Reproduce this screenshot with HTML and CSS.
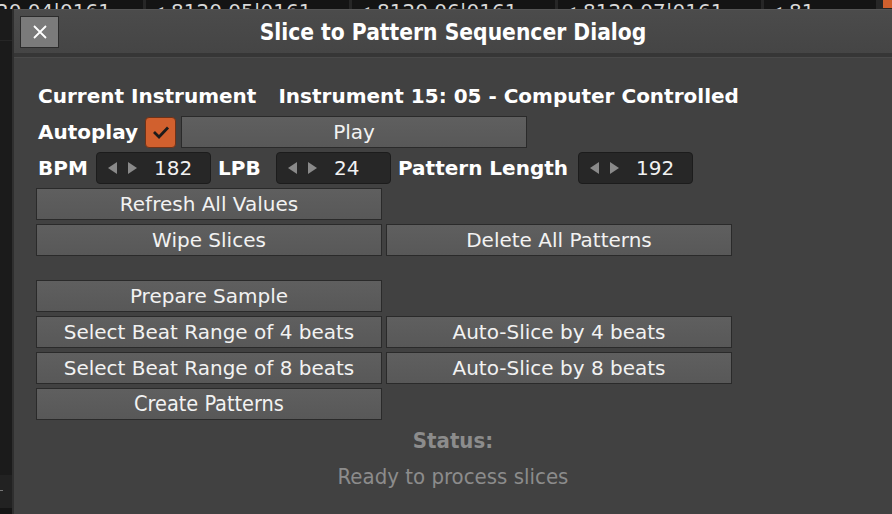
FILE: index.html
```html
<!DOCTYPE html>
<html>
<head>
<meta charset="utf-8">
<link rel="stylesheet" href="styles.css">
</head>
<body>
<div class="strip">
  <div class="cell first"><span class="ctext">20 04|0161</span></div>
  <div class="cell"><span class="tri">◂</span><span class="ctext">8120 05|0161</span></div>
  <div class="cell"><span class="tri">◂</span><span class="ctext">8120 06|0161</span></div>
  <div class="cell"><span class="tri">◂</span><span class="ctext">8120 07|0161</span></div>
  <div class="cell last"><span class="tri">◂</span><span class="ctext">81</span></div>
  <div class="orange"></div>
</div>
<div class="main">
  <div class="gutter">
    <div class="g1"></div>
    <div class="g2"></div>
    <div class="g3"></div>
    <div class="g4"><span class="dash"></span></div>
    <div class="g5"></div>
  </div>
  <div class="dialog">
    <div class="titlebar">
      <div class="close">
        <svg width="16" height="16" viewBox="0 0 16 16"><path d="M2 2 L14 14 M14 2 L2 14" stroke="#fff" stroke-width="1.8" fill="none"/></svg>
      </div>
      <div class="title">Slice to Pattern Sequencer Dialog</div>
      <div></div>
    </div>
    <div class="sep"></div>
    <div class="content">
      <div class="row labelrow">
        <span class="lbl">Current Instrument</span>
        <span class="lbl">Instrument 15: 05 - Computer Controlled</span>
      </div>
      <div class="row">
        <span class="lbl">Autoplay</span>
        <span class="check">
          <svg width="18" height="14" viewBox="0 0 18 14"><path d="M2 7 L7 12 L16 2.5" stroke="#1b1b1b" stroke-width="2.8" fill="none"/></svg>
        </span>
        <button class="btn play">Play</button>
      </div>
      <div class="row spinrow">
        <span class="lbl sl bpm">BPM</span>
        <div class="spin"><span class="arr l"></span><span class="arr r"></span><span class="val">182</span></div>
        <span class="lbl sl lpb">LPB</span>
        <div class="spin"><span class="arr l"></span><span class="arr r"></span><span class="val">24</span></div>
        <span class="lbl sl plen">Pattern Length</span>
        <div class="spin"><span class="arr l"></span><span class="arr r"></span><span class="val">192</span></div>
      </div>
      <div class="grid">
        <button class="btn">Refresh All Values</button>
        <div></div>
        <button class="btn">Wipe Slices</button>
        <button class="btn">Delete All Patterns</button>
        <div></div>
        <div></div>
        <button class="btn">Prepare Sample</button>
        <div></div>
        <button class="btn">Select Beat Range of 4 beats</button>
        <button class="btn">Auto-Slice by 4 beats</button>
        <button class="btn">Select Beat Range of 8 beats</button>
        <button class="btn">Auto-Slice by 8 beats</button>
        <button class="btn cond">Create Patterns</button>
        <div></div>
      </div>
      <div class="status">
        <div class="srow bold">Status:</div>
        <div class="srow">Ready to process slices</div>
      </div>
    </div>
  </div>
</div>
</body>
</html>
```
FILE: styles.css
```css
html, body {
  margin: 0;
  padding: 0;
}
body {
  width: 892px;
  height: 514px;
  overflow: hidden;
  background: #1b1b1b;
  font-family: "DejaVu Sans", "Liberation Sans", sans-serif;
}
.strip {
  height: 9px;
  display: flex;
  overflow: hidden;
  background: #262626;
}
.cell {
  flex: 0 0 203px;
  margin-right: 3px;
  background: #141414;
  color: #d8d8d8;
  font-size: 20px;
  line-height: 20px;
  display: flex;
  align-items: flex-end;
  height: 9px;
  overflow: hidden;
  white-space: nowrap;
  padding-left: 10px;
  box-sizing: border-box;
}
.cell .ctext {
  display: block;
  transform: translateY(12px);
}
.cell .tri {
  display: block;
  font-size: 14px;
  margin-right: 8px;
  transform: translateY(10px);
}
.cell.first {
  flex: 0 0 143px;
  padding-left: 0;
}
.cell.first .ctext { margin-left: -4px; }
.cell.last {
  flex: 0 0 112px;
  margin-right: 7px;
}
.orange {
  flex: 1;
  background: #d0602e;
  height: 8px;
}
.main {
  display: flex;
  height: 505px;
}
.gutter {
  width: 12px;
  display: flex;
  flex-direction: column;
}
.g1 { height: 31px; background: #1b1b1b; }
.g2 { height: 1px; background: #262626; }
.g3 { height: 434px; background: #1b1b1b; }
.g4 { height: 33px; background: #222; position: relative; }
.g5 { flex: 1; background: #151515; }
.dash {
  position: absolute;
  left: 0;
  top: 15px;
  width: 3px;
  height: 1px;
  background: #777;
}
.dialog {
  flex: 1;
  border-left: 2px solid #2f2f2f;
  background: #414141;
  display: flex;
  flex-direction: column;
}
.titlebar {
  height: 44px;
  display: grid;
  grid-template-columns: 1fr auto 1fr;
  align-items: center;
  background: linear-gradient(#4b4b4b, #454545);
  border-top: 1px solid #555;
  box-sizing: border-box;
  padding-left: 6px;
}
.close {
  justify-self: start;
  width: 37px;
  height: 30px;
  background: #7b7b7b;
  border: 1px solid #2c2c2c;
  display: flex;
  align-items: center;
  justify-content: center;
}
.title {
  color: #fff;
  font-family: "DejaVu Sans Condensed", "DejaVu Sans", sans-serif;
  font-weight: bold;
  font-size: 22.6px;
  padding-right: 6px;
}
.sep {
  height: 4px;
  background: #363636;
  border-bottom: 1px solid #4a4a4a;
}
.content {
  padding: 22px 0 0 22px;
  display: flex;
  flex-direction: column;
  gap: 4px;
}
.row {
  height: 32px;
  display: flex;
  align-items: center;
  gap: 7px;
}
.labelrow { gap: 20px; }
.spinrow { gap: 0; }
.lbl {
  color: #fff;
  font-weight: bold;
  font-size: 20px;
  padding-left: 2px;
}
.sl { box-sizing: border-box; }
.bpm { width: 60px; }
.lpb { width: 65px; padding-left: 7px; }
.plen { width: 187px; padding-left: 7px; }
.check {
  width: 29px;
  height: 29px;
  border: 1px solid #6e3218;
  border-radius: 4px;
  background: #d1602e;
  display: flex;
  align-items: center;
  justify-content: center;
  margin-right: -2px;
}
.btn {
  height: 32px;
  box-sizing: border-box;
  border: 1px solid #2a2a2a;
  background: linear-gradient(#5f5f5f, #585858);
  color: #f2f2f2;
  font-family: "DejaVu Sans", sans-serif;
  font-size: 20px;
  padding: 0;
  margin: 0;
  line-height: 1;
}
.btn.play { width: 346px; }
.btn.cond {
  font-family: "DejaVu Sans Condensed", "DejaVu Sans", sans-serif;
  font-size: 21.5px;
}
.spin {
  width: 115px;
  height: 32px;
  box-sizing: border-box;
  border: 1px solid #1c1c1c;
  border-radius: 4px;
  background: #272727;
  display: flex;
  align-items: center;
  padding-left: 11px;
}
.arr {
  width: 0;
  height: 0;
  border-top: 6.5px solid transparent;
  border-bottom: 6.5px solid transparent;
}
.arr.l { border-right: 9px solid #8a8a8a; }
.arr.r { border-left: 9px solid #8a8a8a; margin-left: 11px; }
.val {
  color: #f2f2f2;
  font-size: 20px;
  margin-left: 17px;
}
.grid {
  display: grid;
  grid-template-columns: 346px 346px;
  grid-template-rows: 32px 32px 16px 32px 32px 32px 32px;
  column-gap: 4px;
  row-gap: 4px;
}
.status {
  display: flex;
  flex-direction: column;
  gap: 4px;
  margin-left: -22px;
  width: 878px;
}
.srow {
  height: 32px;
  display: flex;
  align-items: center;
  justify-content: center;
  color: #8c8c8c;
  font-family: "DejaVu Sans Condensed", "DejaVu Sans", sans-serif;
  font-size: 22px;
}
.srow.bold { font-weight: bold; }
```
